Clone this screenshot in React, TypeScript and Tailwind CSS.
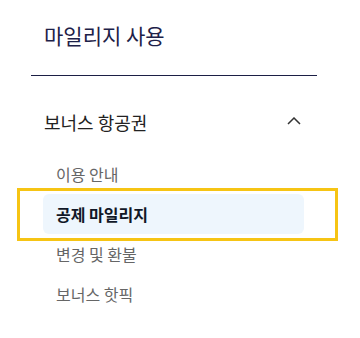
import React from "react";

export default function App() {
  const font = { fontFamily: '"Noto Sans CJK KR", "Noto Sans", sans-serif' };
  return (
    <div className="w-[360px] h-[338px] bg-white pl-[31px]" style={font}>
      <div className="pt-5 pl-[13px] text-[21px] leading-[30px] text-[#1d2148]">마일리지 사용</div>
      <div className="mt-[25px] w-[286px] h-px bg-[#1c1f45]" />
      <div className="mt-[33px] w-[286px] flex items-center justify-between pl-[13px] pr-[16px]">
        <span className="text-[18px] leading-[26px] text-[#222]">보너스 항공권</span>
        <svg width="14" height="8" viewBox="0 0 14 8" fill="none" className="mt-[-3px]">
          <path d="M1 7 L7 1 L13 7" stroke="#333" strokeWidth="1.5" />
        </svg>
      </div>
      <div className="mt-[19px] ml-3 w-[261px] flex flex-col">
        <div className="h-10 flex items-center pl-[13px] text-[16px] text-[#666]">이용 안내</div>
        <div className="relative h-10 flex items-center pl-[13px] rounded-md bg-[#eef6fd] text-[16px] font-bold text-[#111827]">
          공제 마일리지
          <div className="absolute left-[-26px] top-[-6px] right-[-34px] bottom-[-7px] border-[3px] border-[#f6c414] pointer-events-none" />
        </div>
        <div className="h-10 flex items-center pl-[13px] text-[16px] text-[#666]">변경 및 환불</div>
        <div className="h-10 flex items-center pl-[13px] text-[16px] text-[#666]">보너스 핫픽</div>
      </div>
    </div>
  );
}
